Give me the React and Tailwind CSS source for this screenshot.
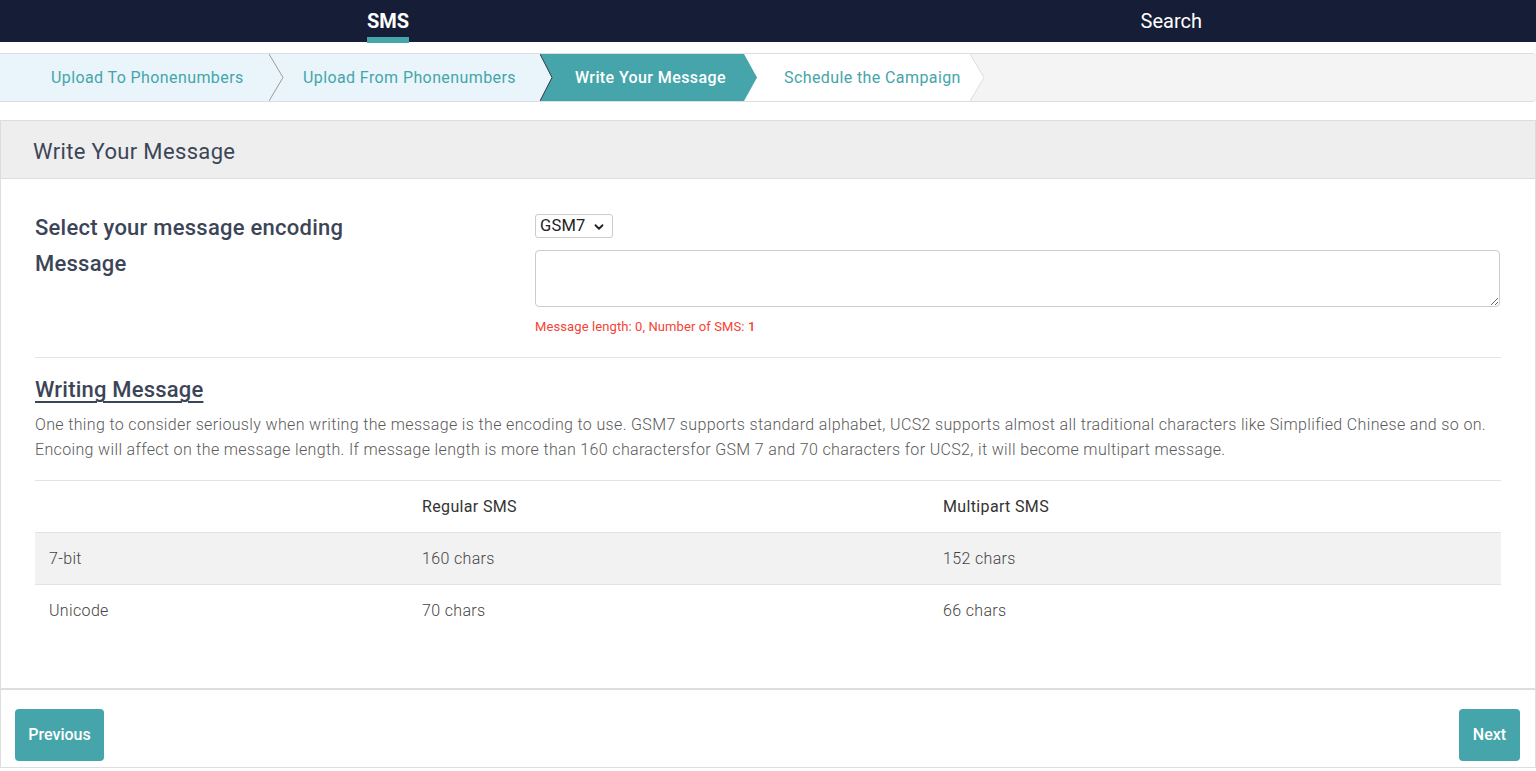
import React from 'react';
import { ChevronDown } from 'lucide-react';

const rows = [
  { type: '7-bit', regular: '160 chars', multi: '152 chars', shaded: true },
  { type: 'Unicode', regular: '70 chars', multi: '66 chars', shaded: false },
];

function Steps() {
  return (
    <div className="mt-[11px] flex h-[49px] border-y border-[#dddddd] bg-[#f4f4f4] rounded-r-[4px] text-[16px] tracking-[0.4px]">
      {/* step 1 */}
      <div className="w-[269px] flex items-center pl-[51px] bg-[#eaf5fb] text-[#45a5aa]">Upload To Phonenumbers</div>
      <svg width="15" height="47" viewBox="0 0 15 47" className="shrink-0">
        <rect width="15" height="47" fill="#eaf5fb" />
        <polyline points="0,0 14,23.5 0,47" fill="none" stroke="#9a9a9a" strokeWidth="1" />
      </svg>
      {/* step 2 */}
      <div className="w-[256px] flex items-center pl-[19px] bg-[#eaf5fb] text-[#45a5aa]">Upload From Phonenumbers</div>
      <svg width="13" height="47" viewBox="0 0 13 47" className="shrink-0">
        <rect width="13" height="47" fill="#45a5aa" />
        <polygon points="0,0 12,23.5 0,47" fill="#eaf5fb" />
        <polyline points="0,0 12,23.5 0,47" fill="none" stroke="#2f3b44" strokeWidth="1" />
      </svg>
      {/* step 3 active */}
      <div className="w-[191px] flex items-center pl-[22px] bg-[#45a5aa] text-white font-medium">Write Your Message</div>
      <svg width="13" height="47" viewBox="0 0 13 47" className="shrink-0">
        <rect width="13" height="47" fill="#ffffff" />
        <polygon points="0,0 13,23.5 0,47" fill="#45a5aa" />
      </svg>
      {/* step 4 */}
      <div className="w-[213px] flex items-center pl-[27px] bg-white text-[#45a5aa]">Schedule the Campaign</div>
      <svg width="15" height="47" viewBox="0 0 15 47" className="shrink-0">
        <rect width="15" height="47" fill="#f4f4f4" />
        <polygon points="0,0 14,23.5 0,47" fill="#ffffff" />
        <polyline points="0,0 14,23.5 0,47" fill="none" stroke="#dcdcdc" strokeWidth="1" />
      </svg>
      <div className="flex-1" />
    </div>
  );
}

export default function App() {
  return (
    <div className="min-h-[771px] bg-white font-['Roboto','Liberation_Sans',sans-serif] text-[#3c4557] tracking-[0.35px]">
      {/* Top nav */}
      <div className="h-[42px] bg-[#161d37] flex text-white text-[20px] tracking-normal">
        <div className="relative ml-[367px] w-[42px] h-full flex items-center justify-center font-bold">
          SMS
          <div className="absolute left-0 right-0 bottom-[-1px] h-[6px] bg-[#45a5aa]" />
        </div>
        <div className="ml-auto mr-[334px] h-full flex items-center">Search</div>
      </div>

      <Steps />

      {/* Card */}
      <div className="mt-[18px] border border-[#dddddd]">
        <div className="h-[58px] bg-[#eeeeee] border-b border-[#dddddd] flex items-center pt-[3px] px-[32px] text-[22px]">
          Write Your Message
        </div>

        <div className="px-[34px] pt-[35px] pb-[52px]">
          <div className="flex">
            <div className="w-[500px] pt-[2px] text-[22px] font-medium tracking-[0.25px]">
              <div className="leading-[24px]">Select your message encoding</div>
              <div className="mt-[12px] leading-[24px]">Message</div>
            </div>
            <div className="flex-1">
              <div className="relative w-[78px] h-[24px] border border-[#cccccc] rounded-[3px] flex items-center pl-[4px] text-[16.5px] text-[#222222] tracking-[0.2px]">
                GSM7
                <ChevronDown className="absolute right-[6px] top-[5px] w-[14px] h-[14px]" strokeWidth={3.2} />
              </div>
              <textarea className="mt-[12px] block w-[965px] h-[57px] border border-[#cccccc] rounded-[4px] outline-none" />
              <div className="mt-[11px] text-[13px] leading-[18px] tracking-[0.1px] text-[#f44336]">
                Message length: 0, Number of SMS: <span className="font-medium">1</span>
              </div>
            </div>
          </div>

          <div className="mt-[21px] border-t border-[#e5e5e5]" />

          <h2 className="mt-[17px] text-[22px] leading-[30px] font-medium tracking-[0.2px] underline underline-offset-[4px] decoration-[2px]">Writing Message</h2>
          <p className="mt-[7px] text-[16px] leading-[25px] font-light text-[#5a5a5a]">
            One thing to consider seriously when writing the message is the encoding to use. GSM7 supports standard alphabet, UCS2 supports almost all traditional characters like Simplified Chinese and so on. Encoing will affect on the message length. If message length is more than 160 charactersfor GSM 7 and 70 characters for UCS2, it will become multipart message.
          </p>

          <div className="mt-[18px] text-[16px]">
            <div className="grid grid-cols-[373px_521px_1fr] h-[52px] items-center border-t border-[#e2e2e2] text-[#333333]">
              <div className="pl-[14px]" />
              <div className="pl-[14px]">Regular SMS</div>
              <div className="pl-[14px]">Multipart SMS</div>
            </div>
            {rows.map((r) => (
              <div
                key={r.type}
                className={`grid grid-cols-[373px_521px_1fr] h-[52px] items-center border-t border-[#e2e2e2] font-light text-[#444444] ${r.shaded ? 'bg-[#f2f2f2]' : ''}`}
              >
                <div className="pl-[14px]">{r.type}</div>
                <div className="pl-[14px]">{r.regular}</div>
                <div className="pl-[14px]">{r.multi}</div>
              </div>
            ))}
          </div>
        </div>

        <div className="border-t-2 border-[#dddddd] pl-[14px] pr-[15px] pt-[19px] pb-[6px] flex justify-between">
          <button className="h-[52px] w-[89px] rounded-[4px] bg-[#45a5aa] text-white text-[16px] font-medium tracking-normal">Previous</button>
          <button className="h-[52px] w-[61px] rounded-[4px] bg-[#45a5aa] text-white text-[16px] font-medium tracking-normal">Next</button>
        </div>
      </div>
    </div>
  );
}
